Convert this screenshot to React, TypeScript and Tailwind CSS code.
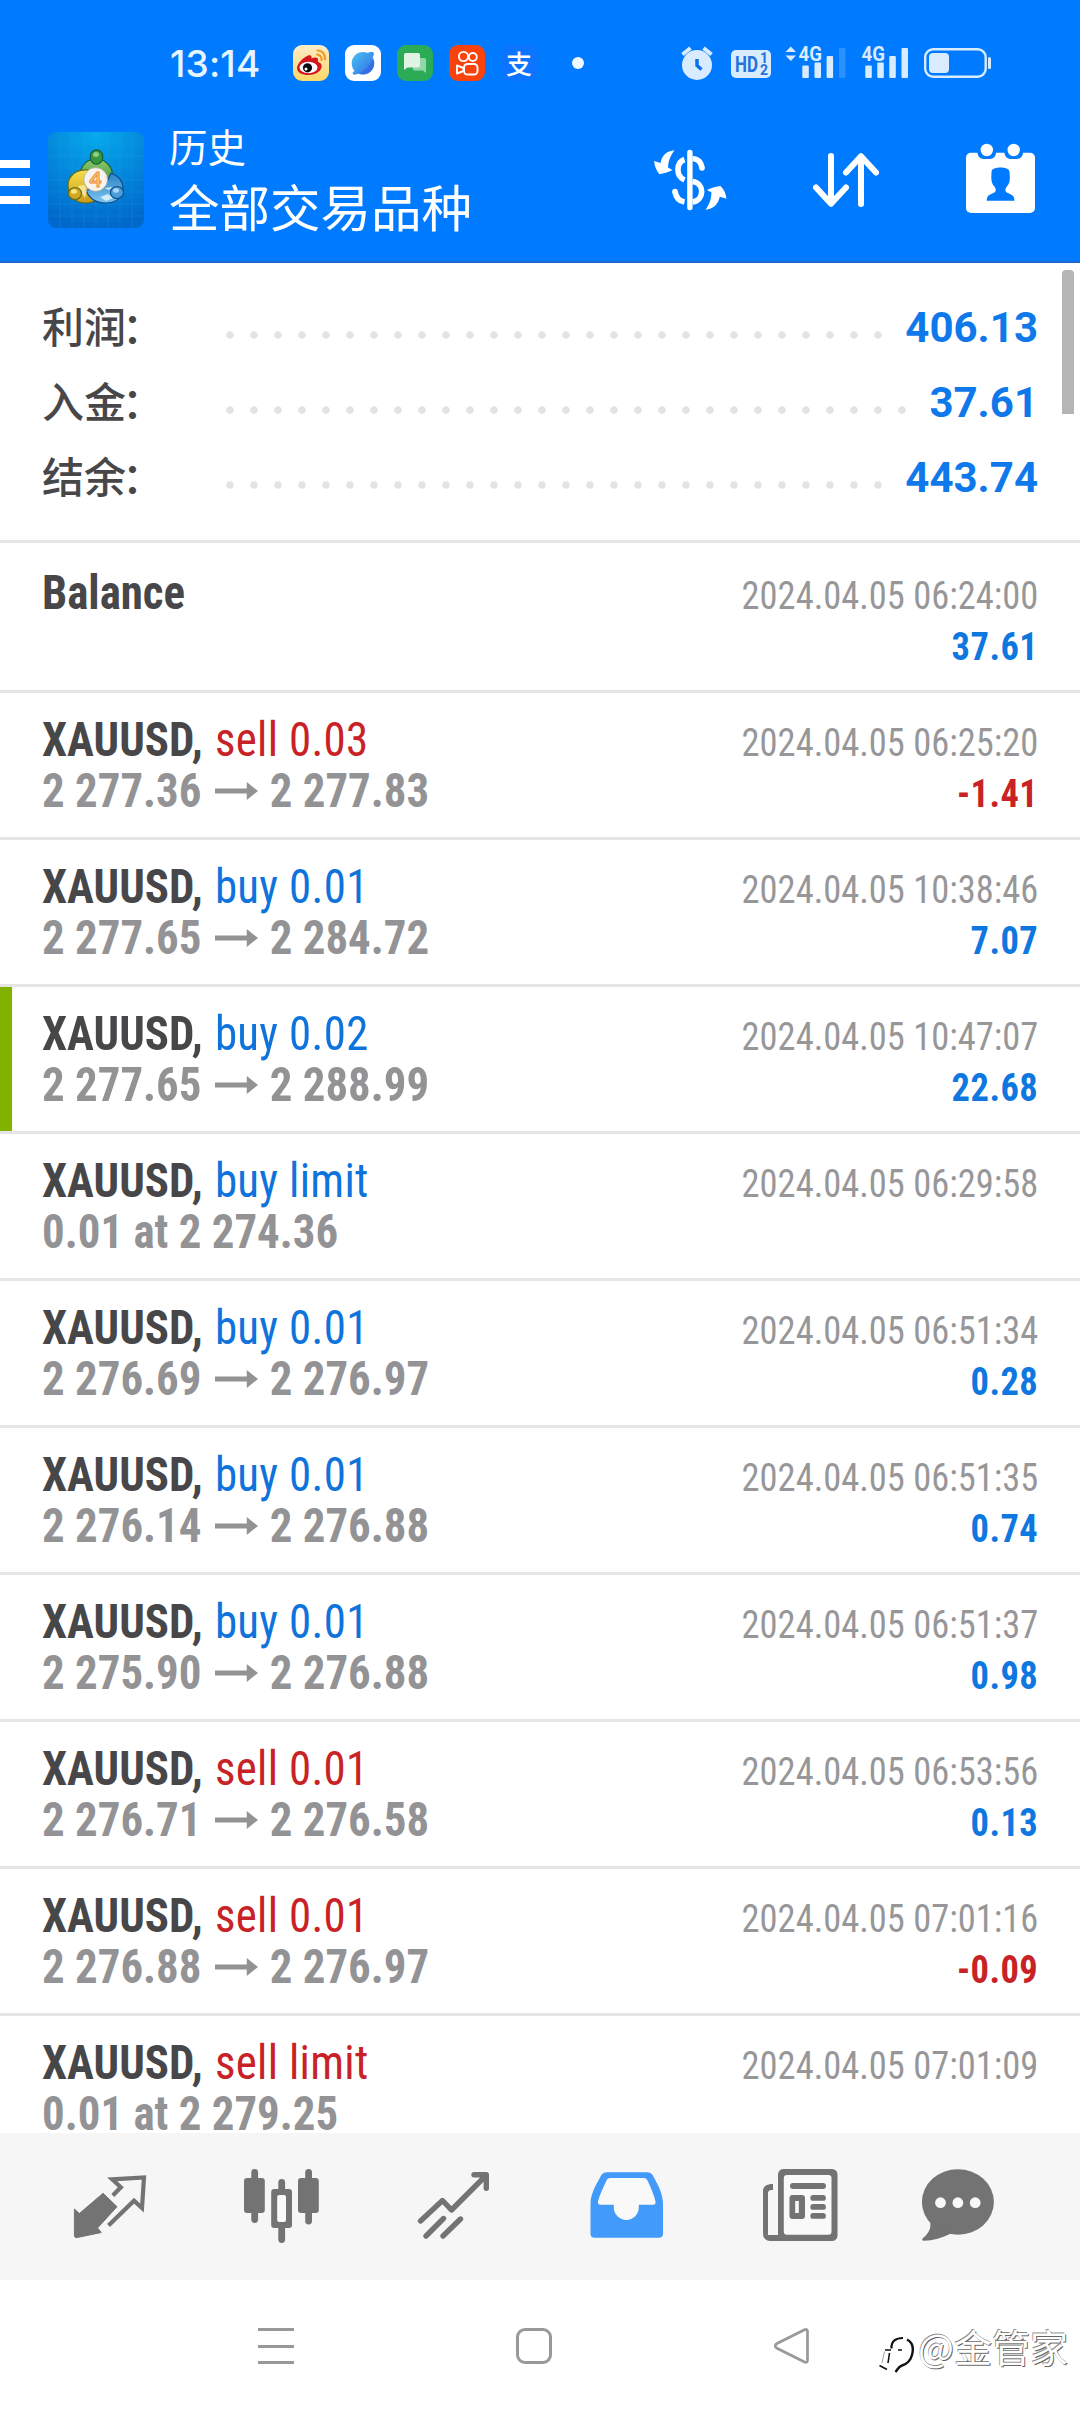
import type { ReactNode } from "react";

type Side = "buy" | "sell";
type Deal = {
  side: Side;
  label: string;
  from?: string;
  to?: string;
  note?: string;
  time: string;
  profit?: string;
  marked?: boolean;
};

const deals: Deal[] = [
  { side: "sell", label: "sell 0.03", from: "2 277.36", to: "2 277.83", time: "2024.04.05 06:25:20", profit: "-1.41" },
  { side: "buy", label: "buy 0.01", from: "2 277.65", to: "2 284.72", time: "2024.04.05 10:38:46", profit: "7.07" },
  { side: "buy", label: "buy 0.02", from: "2 277.65", to: "2 288.99", time: "2024.04.05 10:47:07", profit: "22.68", marked: true },
  { side: "buy", label: "buy limit", note: "0.01 at 2 274.36", time: "2024.04.05 06:29:58" },
  { side: "buy", label: "buy 0.01", from: "2 276.69", to: "2 276.97", time: "2024.04.05 06:51:34", profit: "0.28" },
  { side: "buy", label: "buy 0.01", from: "2 276.14", to: "2 276.88", time: "2024.04.05 06:51:35", profit: "0.74" },
  { side: "buy", label: "buy 0.01", from: "2 275.90", to: "2 276.88", time: "2024.04.05 06:51:37", profit: "0.98" },
  { side: "sell", label: "sell 0.01", from: "2 276.71", to: "2 276.58", time: "2024.04.05 06:53:56", profit: "0.13" },
  { side: "sell", label: "sell 0.01", from: "2 276.88", to: "2 276.97", time: "2024.04.05 07:01:16", profit: "-0.09" },
  { side: "sell", label: "sell limit", note: "0.01 at 2 279.25", time: "2024.04.05 07:01:09" },
];

const summary = [
  { label: "利润", value: "406.13", dots: "w-[672px]" },
  { label: "入金", value: "37.61", dots: "w-[696px]" },
  { label: "结余", value: "443.74", dots: "w-[672px]" },
];

function StatusBar() {
  return (
    <div className="flex h-[126px] items-center pl-[170px] pr-[88px]">
      <span className="w-[96px] text-[37px] font-medium leading-none text-[#e6f5ff] font-[Inter] tracking-[0.2px]">13:14</span>
      <div className="ml-[27px] flex gap-4">
        <svg viewBox="0 0 36 36" className="size-9">
          <defs>
            <linearGradient id="wb" x1="0" y1="0" x2="0" y2="1">
              <stop offset="0" stopColor="#fdecc8" />
              <stop offset="1" stopColor="#fbd766" />
            </linearGradient>
          </defs>
          <rect width="36" height="36" rx="9" fill="url(#wb)" />
          <path d="M4 23c0-4 6-10.500 11-12.500 3.500-1.200 3.800 1 3.500 3 3-1.500 6.800-1.500 6.500 1.500-.1 1-.4 1.500.4 2 3 1 3.600 3 3.100 5.500-1 4.500-6.800 7.500-13 7.500C9 30 4 27.500 4 23z" fill="#d5161c" />
          <ellipse cx="15.500" cy="22.500" rx="9" ry="5.800" fill="#fff" />
          <circle cx="14.500" cy="22.800" r="4.600" fill="#0b0b12" />
          <circle cx="13" cy="24" r="1.500" fill="#fff" />
          <path d="M24 9.500a4.800 4.800 0 0 1 4.500 5.500M24.500 5.500c5 0 8 4 7.500 9" fill="none" stroke="#f09a28" strokeWidth="2.200" strokeLinecap="round" />
        </svg>
        <svg viewBox="0 0 36 36" className="size-9">
          <defs>
            <linearGradient id="gl" x1="0" y1="0" x2="1" y2="1">
              <stop offset="0" stopColor="#4bc3f2" />
              <stop offset=".55" stopColor="#3a93ec" />
              <stop offset="1" stopColor="#3867e8" />
            </linearGradient>
          </defs>
          <rect width="36" height="36" rx="9" fill="#fff" />
          <circle cx="18" cy="18.200" r="11.300" fill="url(#gl)" />
          <path d="M22 8.500c2-1.600 5-2.500 6.300-1.300 1.300 1.200.3 4-1 5.800zM10 25.500c-2 1-3 3-2 3.800 1.500 1 4 0 6-1z" fill="url(#gl)" />
          <path d="M28.300 14c2 8-3 15-10 15.500-2 0-3.500-.4-4.500-1 6-2.700 11-7.700 14.500-14.500z" fill="#315fe0" opacity=".55" />
        </svg>
        <svg viewBox="0 0 36 36" className="size-9">
          <rect width="36" height="36" rx="9" fill="#2cab56" />
          <path d="M17 13h10c1.200 0 2 .8 2 2v13l-3-2.500h-8.500c-1 0-1.500-.6-1.500-1.500z" fill="#93d6a8" />
          <path d="M9 8h12c1.200 0 2 .8 2 2v10.500c0 1.200-.8 2-2 2H10.500L7 25V10c0-1.200.8-2 2-2z" fill="#dff4e5" />
        </svg>
        <svg viewBox="0 0 36 36" className="size-9">
          <rect width="36" height="36" rx="9" fill="#f9430d" />
          <g fill="none" stroke="#fff" strokeWidth="1.900" strokeLinejoin="round">
            <circle cx="14.500" cy="11.500" r="4.600" />
            <circle cx="23.800" cy="12" r="4" />
            <rect x="15" y="19" width="13.500" height="10.500" rx="3.500" />
            <path d="M14.500 23 8 20.500v8l6.500-2.500z" />
          </g>
        </svg>
        <div className="flex size-9 items-center justify-center rounded-[9px] bg-[#0c74ff] font-['Noto_Sans_CJK_SC',sans-serif] text-[26px] font-medium leading-[36px] text-white">支</div>
      </div>
      <span className="ml-[35px] size-3 rounded-full bg-[#f0f8ff]" />
      <svg viewBox="680 40 312 46" className="ml-auto h-[46px] w-[312px]" fill="#d9ecff">
        <circle cx="697" cy="65" r="15" />
        <path d="M682.500 54.500l8-6.500M711.500 54.500l-8-6.500" stroke="#d9ecff" strokeWidth="4" />
        <path d="M697 59v6.500l4.500 4" fill="none" stroke="#0f6fe6" strokeWidth="3.500" />
        <rect x="731" y="50" width="40" height="28" rx="5" />
        <text x="735" y="72" fontFamily="Roboto" fontSize="22" fontWeight="700" fill="#2472dc" textLength="23" lengthAdjust="spacingAndGlyphs">HD</text>
        <text x="760" y="63" fontFamily="Roboto" fontSize="14" fontWeight="700" fill="#2472dc">1</text>
        <text x="760" y="75" fontFamily="Roboto" fontSize="14" fontWeight="700" fill="#2472dc">2</text>
        <path d="M785.500 52h10.500l-5.200-5.500zM785.500 55.500h10.500l-5.200 5.500z" />
        <text x="798.500" y="61" fontFamily="Roboto" fontSize="20" fontWeight="700" textLength="23.500" lengthAdjust="spacingAndGlyphs">4G</text>
        <rect x="802.300" y="65.500" width="6.500" height="12.500" rx="1" />
        <rect x="814.500" y="62.500" width="6.500" height="15.500" rx="1" />
        <rect x="826.600" y="56" width="6.500" height="22" rx="1" />
        <rect x="839" y="48" width="6.500" height="30" rx="1" opacity=".2" />
        <text x="861.500" y="61" fontFamily="Roboto" fontSize="20" fontWeight="700" textLength="23.500" lengthAdjust="spacingAndGlyphs">4G</text>
        <rect x="865.300" y="65.500" width="6.500" height="12.500" rx="1" />
        <rect x="877.300" y="62.500" width="6.500" height="15.500" rx="1" />
        <rect x="889.300" y="56" width="6.500" height="22" rx="1" />
        <rect x="901.500" y="48" width="6.500" height="30" rx="1" />
        <rect x="925.200" y="49.200" width="60.500" height="27.600" rx="8" fill="none" stroke="#d9ecff" strokeWidth="2.400" />
        <rect x="929" y="53" width="20" height="20" rx="4" />
        <rect x="988" y="57" width="3" height="12" rx="1.500" />
      </svg>
    </div>
  );
}

function AppLogo() {
  return (
    <svg viewBox="48 132 96 96" className="ml-[18px] mt-[6px] size-24 shrink-0">
      <defs>
        <radialGradient id="bg" cx=".5" cy="0" r="1">
          <stop offset="0" stopColor="#06aaec" />
          <stop offset="1" stopColor="#0068cb" />
        </radialGradient>
        <linearGradient id="gr" x1="0" y1="0" x2="0" y2="1">
          <stop offset="0" stopColor="#8ccb6a" />
          <stop offset="1" stopColor="#2f8a35" />
        </linearGradient>
        <linearGradient id="ye" x1="0" y1="0" x2="0" y2="1">
          <stop offset="0" stopColor="#f5e04a" />
          <stop offset="1" stopColor="#c99a17" />
        </linearGradient>
        <linearGradient id="bl" x1="0" y1="0" x2="0" y2="1">
          <stop offset="0" stopColor="#2a83c8" />
          <stop offset="1" stopColor="#7cc4ee" />
        </linearGradient>
      </defs>
      <rect x="48" y="132" width="96" height="96" rx="8" fill="url(#bg)" />
      <path d="M60 132v96M72 132v96M84 132v96M96 132v96M108 132v96M120 132v96M132 132v96M48 144h96M48 156h96M48 168h96M48 180h96M48 192h96M48 204h96M48 216h96" stroke="#4cc0f5" strokeWidth=".6" opacity=".22" />
      <g strokeLinejoin="round">
        <path d="M79 181c0-14 7-22 17-22s17 8 17 19c0 6-3 10-7 12l-20-12z" fill="url(#gr)" stroke="#1b5c3a" strokeWidth="1.200" />
        <path d="M88 170c-12-1-20 6-20 15 0 11 8 18 17 18 6 0 10-1 13-5z" fill="url(#ye)" stroke="#5f6a1c" strokeWidth="1.200" />
        <path d="M111 173c8 3 12 9 12 15 0 9-7 15-17 15s-17-4-20-13l18-2z" fill="url(#bl)" stroke="#0e4d8c" strokeWidth="1.200" />
        <path d="M100 197l8-3 5 4-7 3zM104 188l5 2 4-3" fill="#e8f7ff" opacity=".8" />
        <path d="M78 186l6-1 3 5-2 8-4-6z" fill="#fff8bf" opacity=".7" />
        <ellipse cx="96.500" cy="157" rx="6.300" ry="7.200" fill="#36973e" stroke="#1b5c3a" strokeWidth="1.200" />
        <ellipse cx="96" cy="154.500" rx="3" ry="2.500" fill="#a7dd94" opacity=".8" />
        <ellipse cx="75" cy="193.500" rx="6.500" ry="6" fill="#d0ab22" stroke="#6b681b" strokeWidth="1.200" />
        <ellipse cx="74" cy="191.500" rx="3" ry="2.200" fill="#fbf08c" opacity=".9" />
        <ellipse cx="117" cy="192.500" rx="6.500" ry="6" fill="#4a9fd8" stroke="#0e4d8c" strokeWidth="1.200" />
        <ellipse cx="116" cy="190.500" rx="3" ry="2.200" fill="#bfe6fb" opacity=".8" />
      </g>
      <circle cx="95.700" cy="179.500" r="11.800" fill="#f7f3ee" stroke="#b7b3a4" strokeWidth=".8" />
      <text x="95.500" y="187" textAnchor="middle" fontFamily="Lato" fontSize="21" fontWeight="700" fill="#f7c489" stroke="#f08a35" strokeWidth=".8">4</text>
    </svg>
  );
}

function Header() {
  return (
    <div className="flex h-[137px] items-start border-b-2 border-[#1a68cf]">
      <div className="mt-[34px] flex w-[30px] shrink-0 flex-col gap-[10px]">
        <span className="h-2 bg-white" />
        <span className="h-2 bg-white" />
        <span className="h-2 bg-white" />
      </div>
      <AppLogo />
      <div className="ml-[25px] font-['Noto_Sans_CJK_SC',sans-serif] text-white">
        <div className="text-[38.5px] leading-[38px]">历史</div>
        <div className="text-[50.5px] leading-[82px]">全部交易品种</div>
      </div>
      <svg viewBox="650 142 80 76" className="ml-auto mt-4 h-[76px] w-20" fill="#fff">
        <path d="M687.200 152.500a2.700 2.700 0 0 1 5.400 0v55a2.700 2.700 0 0 1-5.400 0z" />
        <path d="M692.500 158.500c5 .3 8.500 3.500 9.500 9M684.500 159.500c-8.500 3-9 16.500 0 20.500M692.500 181.500c12 1.500 12.500 18.500 0 20.500M675 191.500c.8 5.500 4.200 9.500 9.500 10.500" fill="none" stroke="#fff" strokeWidth="5.600" />
        <circle cx="702" cy="168" r="2.800" />
        <circle cx="675" cy="191.500" r="2.800" />
        <path d="M674.500 150.300c-8 .7-12.500 5-14 12.700l-6.500-2c.5 5 2.500 10 5.500 13.200 3.500-.7 9-2 13-4.200l-4.500-2.500c.5-7 2.500-12 6.500-17.200z" />
        <path d="M705.500 209.800c8-1 12.500-5 14.300-13l6.700 2c-.5-5-2.500-9.500-6-12.800-4 .3-9 1.700-13.500 4l4.500 2.500c-.5 7-2 12-6 17.300z" />
      </svg>
      <svg viewBox="810 150 72 60" className="ml-20 mt-6 h-[60px] w-[72px]" fill="none" stroke="#fff" strokeWidth="6" strokeLinecap="round" strokeLinejoin="round">
        <path d="M831 156v47M816 187.500l15 16.300 15-16.300M861 204v-47M846 172.500l15-16.300 15 16.300" />
      </svg>
      <svg viewBox="964 142 74 74" className="ml-[82px] mr-[42px] mt-4 h-[74px] w-[74px]">
        <rect x="966" y="152.700" width="69" height="60.300" rx="5" fill="#fff" />
        <path d="M977.500 151h18.500v2a6 6 0 0 1-6 6h-6.500a6 6 0 0 1-6-6zM1004.500 151h18.500v2a6 6 0 0 1-6 6h-6.500a6 6 0 0 1-6-6z" fill="#007aff" />
        <circle cx="986.800" cy="150" r="6.200" fill="#fff" />
        <circle cx="1013.700" cy="150" r="6.200" fill="#fff" />
        <path d="M991.500 172c0-3.500 5-4.500 9-4.500s9 1 9 4.500l.4 6c-.1 3.500-1 6.500-3 8.500-2.300 2.700-1.700 5 .3 6.300 3.500 1.700 7.300 2.200 7.300 8H986.700c0-5.800 3.800-6.300 7.300-8 2-1.300 2.600-3.600.3-6.300-2-2-2.900-5-3-8.500z" fill="#007aff" />
      </svg>
    </div>
  );
}

function Summary() {
  return (
    <div className="relative h-[280px] border-b-[3px] border-[#e5e5e5] pl-[42px] pr-[42px] pt-[27px]">
      {summary.map((s) => (
        <div key={s.label} className="flex h-[75px]">
          <div className="w-[176px] font-['Noto_Sans_CJK_SC',sans-serif] text-[42px] font-medium leading-[69px] text-[#47474a]">
            {s.label}
            <span className="-ml-1">：</span>
          </div>
          <div className={`${s.dots} mt-[41px] h-2 bg-[radial-gradient(circle,#e3e3e3_3.3px,transparent_4.2px)] bg-[length:24px_8px]`} />
          <div className="ml-auto font-[Roboto] text-[42px] font-bold leading-[75px] text-[#0f78ea]">{s.value}</div>
        </div>
      ))}
      <div className="absolute right-[6px] top-[7px] h-[144px] w-3 rounded-t-sm bg-[#b5b5b5]" />
    </div>
  );
}

function Row({ left, right, className }: { left: ReactNode; right: ReactNode; className: string }) {
  return (
    <div className={`relative flex shrink-0 justify-between border-b-[3px] border-[#e5e5e5] pl-[42px] pr-[42px] font-['Roboto_Condensed'] ${className}`}>
      <div className="origin-top-left scale-x-[0.935] whitespace-nowrap text-5xl leading-[51px] font-bold text-[#939395]">{left}</div>
      <div className="mt-1 origin-top-right scale-x-[0.935] whitespace-nowrap text-right text-[39px] leading-[51px] text-[#979799]">{right}</div>
    </div>
  );
}

function Arrow() {
  return (
    <svg viewBox="0 0 46 18" className="ml-[14px] mr-[13px] inline-block h-[18px] w-[46px] align-[7px]" fill="#939395">
      <path d="M0 6.500h34V0l12 9-12 9v-6.500H0z" />
    </svg>
  );
}

function DealRow({ deal }: { deal: Deal }) {
  return (
    <Row
      className="h-[147px] pt-[21px]"
      left={
        <>
          {deal.marked && <div className="absolute -left-[45px] -top-[21px] h-[144px] w-[13px] bg-[#82b100]" />}
          <div className="text-[#47474a]">
            XAUUSD,{" "}
            <span className={deal.side === "buy" ? "ml-[2px] font-normal tracking-[0.35px] text-[#0f73dc]" : "ml-[2px] font-normal tracking-[0.35px] text-[#c82226]"}>{deal.label}</span>
          </div>
          {deal.note ? (
            <div>{deal.note}</div>
          ) : (
            <div>
              {deal.from}
              <Arrow />
              {deal.to}
            </div>
          )}
        </>
      }
      right={
        <>
          <div>{deal.time}</div>
          {deal.profit && (
            <div className={deal.profit.startsWith("-") ? "font-bold tracking-[0.5px] text-[#c82226]" : "font-bold tracking-[0.5px] text-[#0f78e0]"}>{deal.profit}</div>
          )}
        </>
      }
    />
  );
}

function TabBar() {
  return (
    <div className="flex h-[147px] shrink-0 bg-[#f6f6f6] pl-6">
      <svg viewBox="24 2133 172 147" className="h-[147px] w-[172px]">
        <path d="M103 2193.300l14 13.400L97.500 2228l3.800 4.500-24 5c-2 .3-2.900-.5-2.900-2V2209l5 4.500z" fill="#737373" stroke="#737373" strokeWidth="1" strokeLinejoin="round" />
        <path d="M112.800 2195.500l8-8.200-8.600-8L144 2177.500l-2 30.500-8-7.300-25.500 24.800" fill="none" stroke="#737373" strokeWidth="4.200" />
      </svg>
      <svg viewBox="196 2133 172 147" className="h-[147px] w-[172px]" fill="#737373">
        <rect x="251.300" y="2169" width="6.800" height="54" rx="3.400" />
        <rect x="244" y="2178" width="20.800" height="35" rx="3" />
        <rect x="305.200" y="2169" width="6.800" height="55.500" rx="3.400" />
        <rect x="298" y="2178" width="20.800" height="35" rx="3" />
        <rect x="278.300" y="2179" width="6.800" height="64" rx="3.400" />
        <rect x="271.200" y="2189" width="20.800" height="39" rx="3" />
        <rect x="277.200" y="2195" width="8.800" height="27" rx="2" fill="#f9f9f9" />
      </svg>
      <svg viewBox="368 2133 172 147" className="h-[147px] w-[172px]" fill="none" stroke="#737373" strokeWidth="5.400" strokeLinecap="round" strokeLinejoin="round">
        <path d="M420.500 2221l22-20.500 9 9.500 34.500-34.500M474 2174.800h12.300v13.500M426 2236l17.500-17.500M443 2236l17.500-17" />
      </svg>
      <svg viewBox="540 2133 173 147" className="h-[147px] w-[173px]" fill="#429bfb">
        <path d="M607 2172.300h40c3 0 5 1.400 6.300 4 5.500 10 9.700 18 9.700 28v29.500c0 2.500-1.500 4-4 4h-64.500c-2.500 0-4-1.500-4-4v-29.500c0-10 4.700-18 10.200-28 1.300-2.600 3.300-4 6.300-4z" />
        <path d="M610.500 2178h33c2 0 3.200.8 4 2.500 3.500 7.500 6.500 14.500 8 21 .4 2-.5 3.300-2.500 3.300h-14.200v2.700a12.200 12.200 0 0 1-25 0v-2.700H600.500c-2 0-2.900-1.300-2.500-3.300 1.500-6.500 5-13.500 8.500-21 .8-1.700 2-2.500 4-2.500z" fill="#f9f9f9" />
      </svg>
      <svg viewBox="713 2133 166 147" className="h-[147px] w-[166px]" fill="#737373">
        <path d="M784 2169h48a5.500 5.500 0 0 1 5.500 5.500v61a5.500 5.500 0 0 1-5.500 5.500h-62a7 7 0 0 1-7-7v-43c0-4.500 3.500-7 10-7v6c-3 0-5 .5-5 3v42h10v-60.500a5.500 5.500 0 0 1 6-5.500z" />
        <rect x="783.800" y="2175" width="47.700" height="59.800" rx="3" fill="#f9f9f9" />
        <rect x="790" y="2183" width="36" height="6" rx="3" />
        <rect x="789.500" y="2195" width="15.500" height="24" rx="3" />
        <rect x="795.200" y="2201" width="3.600" height="12" fill="#f9f9f9" />
        <rect x="810.300" y="2195" width="15.600" height="5.800" rx="2.900" />
        <rect x="810.300" y="2204" width="15.600" height="5.800" rx="2.900" />
        <rect x="810.300" y="2213" width="15.600" height="5.800" rx="2.900" />
      </svg>
      <svg viewBox="879 2133 158 147" className="h-[147px] w-[158px]" fill="#737373">
        <ellipse cx="957.900" cy="2202" rx="36" ry="32.800" />
        <path d="M928 2218c5 6 2 15-5 20-1.500 1.200-1 2.800 1 2.700 9-.2 18-2.500 27-7.200z" />
        <circle cx="940.500" cy="2202.700" r="5.400" fill="#f9f9f9" />
        <circle cx="957.900" cy="2202.700" r="5.400" fill="#f9f9f9" />
        <circle cx="975.200" cy="2202.700" r="5.400" fill="#f9f9f9" />
      </svg>
    </div>
  );
}

function NavBar() {
  return (
    <div className="flex h-[132px] shrink-0 items-start pl-[258px] pt-[48px]">
      <div className="flex w-9 flex-col justify-between gap-[13.5px]">
        <span className="h-[3px] bg-[#999]" />
        <span className="h-[3px] bg-[#999]" />
        <span className="h-[3px] bg-[#999]" />
      </div>
      <div className="ml-[222px] size-9 rounded-[9px] border-[3px] border-[#999]" />
      <svg viewBox="0 0 36 36" className="ml-[222px] size-9" fill="none" stroke="#999" strokeWidth="2.700" strokeLinejoin="round">
        <path d="M30.500 1.800 3 15.500c-2.300 1.300-2.300 3.500 0 4.800L30.500 34c2 .8 3 .2 3-1.800V3.500c0-2-1-2.600-3-1.700z" />
      </svg>
      <div className="ml-[68px] flex items-start">
        <svg viewBox="0 0 38 42" className="mt-[5px] h-[42px] w-[38px]" fill="none" stroke="#111">
          <path d="M13.500 15.500C13 8 18 5 25 5" strokeWidth="2.200" />
          <path d="M29 6.500c5 2.500 7 8 5 15.500-1.500 6-5 9-10 10.500-3.500 1-4.500 4-6.500 6.500" strokeWidth="2.400" />
          <path d="M7 17h6M20 17h4M11.500 20 10 30M1.500 32.500l7.500 4" strokeWidth="1.600" />
          <path d="M6.500 18.500 4 30" stroke="#888" strokeWidth=".8" />
        </svg>
        <span className="ml-[2px] whitespace-nowrap font-['Noto_Sans_CJK_SC',sans-serif] text-[38px] leading-[36px] text-white [text-shadow:1px_1px_0_#666,-0.6px_-0.6px_0_#888]">@金管家</span>
      </div>
    </div>
  );
}

export default function App() {
  return (
    <div className="flex h-[2412px] w-[1080px] flex-col overflow-hidden bg-white">
      <div className="h-[263px] shrink-0 bg-[#007aff]">
        <StatusBar />
        <Header />
      </div>
      <div className="h-[1870px] shrink-0 overflow-hidden">
        <Summary />
        <Row
          className="h-[150px] pt-[24px]"
          left={<div className="text-[#47474a]">Balance</div>}
          right={
            <>
              <div>2024.04.05 06:24:00</div>
              <div className="font-bold tracking-[0.5px] text-[#0f78e0]">37.61</div>
            </>
          }
        />
        {deals.map((d) => (
          <DealRow key={d.time} deal={d} />
        ))}
      </div>
      <TabBar />
      <NavBar />
    </div>
  );
}
